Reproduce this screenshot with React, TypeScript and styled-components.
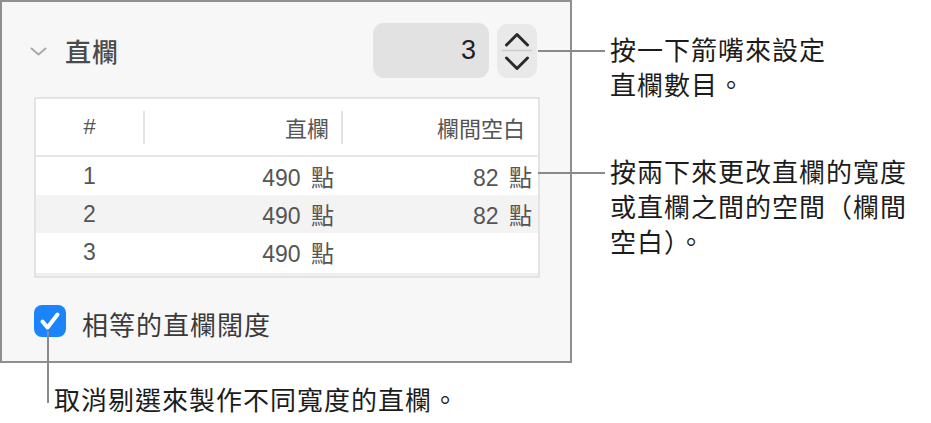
import styled, { createGlobalStyle } from "styled-components";

const GlobalStyle = createGlobalStyle`
  html, body {
    margin: 0;
    background: #ffffff;
  }
  body {
    font-family: "Liberation Sans", "Noto Sans CJK TC", sans-serif;
  }
`;

const Figure = styled.div`
  display: grid;
  grid-template-columns: 572px 1fr;
  grid-template-rows: 363px 1fr;
  width: 931px;
  height: 423px;
  overflow: hidden;
`;

const Panel = styled.section`
  box-sizing: border-box;
  display: flex;
  flex-direction: column;
  padding: 21px 33px 0 28px;
  border: 2px solid #8f8f8f;
  background: #f7f7f7;
`;

const HeaderRow = styled.div`
  display: flex;
  align-items: center;
  height: 55px;
`;

const Disclosure = styled.svg`
  width: 17px;
  height: 9px;
  margin-right: 18px;
  margin-top: 2px;
`;

const Title = styled.h2`
  flex: 1;
  margin: 0;
  font-size: 26px;
  font-weight: 500;
  letter-spacing: 1px;
  color: #4a4a4a;
`;

const NumberField = styled.div`
  box-sizing: border-box;
  display: flex;
  align-items: center;
  justify-content: flex-end;
  width: 116px;
  height: 55px;
  padding-right: 13px;
  border-radius: 11px;
  background: #e2e2e2;
  font-size: 27px;
  color: #222222;
`;

const Stepper = styled.div`
  display: flex;
  width: 40px;
  height: 54px;
  margin-left: 8px;
  border-radius: 10px;
  background: #e9e9e9;
`;

const Table = styled.div`
  display: flex;
  flex-direction: column;
  width: 506px;
  margin: 19px 0 0 4px;
  box-sizing: border-box;
  border: 2px solid #e3e3e3;
  background: #ffffff;
`;

const Row = styled.div<{ $head?: boolean; $striped?: boolean }>`
  display: grid;
  grid-template-columns: 107px 198px 1fr;
  align-items: center;
  height: ${(p) => (p.$head ? "56px" : "38px")};
  border-bottom: ${(p) => (p.$head ? "2px solid #e6e6e6" : "none")};
  background: ${(p) => (p.$striped ? "#f3f3f3" : "transparent")};
  font-size: ${(p) => (p.$head ? "22px" : "23px")};
  word-spacing: ${(p) => (p.$head ? "0" : "4px")};
  color: #555555;
`;

const Cell = styled.div<{ $align: "center" | "right"; $pad?: number; $rule?: boolean }>`
  position: relative;
  display: flex;
  align-items: center;
  justify-content: ${(p) => (p.$align === "center" ? "center" : "flex-end")};
  height: 100%;
  padding-right: ${(p) => p.$pad ?? 0}px;

  &::before {
    content: "";
    display: ${(p) => (p.$rule ? "block" : "none")};
    position: absolute;
    left: 0;
    top: 50%;
    width: 2px;
    height: 33px;
    margin-top: -16px;
    background: #e4e4e4;
  }
`;

const TableFoot = styled.div`
  height: 3px;
  margin-top: 2px;
  background: #eeeeee;
`;

const CheckRow = styled.label`
  display: flex;
  align-items: center;
  gap: 16px;
  margin: 22px 0 0 4px;
  font-size: 26px;
  letter-spacing: 1px;
  color: #3a3a3a;
`;

const CheckBox = styled.span`
  display: flex;
  align-items: center;
  justify-content: center;
  width: 32px;
  height: 32px;
  border-radius: 8px;
  background: #1b84fa;
`;

const CheckLabel = styled.span`
  margin-top: 5px;
`;

const Notes = styled.div`
  display: flex;
  flex-direction: column;
  gap: 52px;
  padding: 34px 0 0 38px;
`;

const Note = styled.p`
  position: relative;
  margin: 0;
  font-size: 26px;
  line-height: 35px;
  letter-spacing: 1px;
  color: #1c1c1c;

  &::before {
    content: "";
    position: absolute;
    left: -72px;
    top: 16px;
    width: 67px;
    height: 2px;
    background: #8a8a8a;
  }
`;

const Caption = styled.p`
  grid-column: 1 / span 2;
  position: relative;
  margin: 21px 0 0 54px;
  font-size: 26px;
  line-height: 35px;
  letter-spacing: 1px;
  color: #1c1c1c;

  &::before {
    content: "";
    position: absolute;
    left: -7px;
    top: -53px;
    width: 2px;
    height: 72px;
    background: #8a8a8a;
  }
`;

const rows = [
  { n: "1", width: "490 點", gutter: "82 點" },
  { n: "2", width: "490 點", gutter: "82 點" },
  { n: "3", width: "490 點", gutter: "" },
];

export default function App() {
  return (
    <>
      <GlobalStyle />
      <Figure>
        <Panel>
          <HeaderRow>
            <Disclosure viewBox="0 0 17 9">
              <polyline
                points="1.5,1.5 8.5,7.5 15.5,1.5"
                fill="none"
                stroke="#a9a9a9"
                strokeWidth="2"
                strokeLinecap="round"
                strokeLinejoin="round"
              />
            </Disclosure>
            <Title>直欄</Title>
            <NumberField>3</NumberField>
            <Stepper>
              <svg width="40" height="54" viewBox="0 0 40 54">
                <polyline
                  points="9.5,21 20,10.5 30.5,21"
                  fill="none"
                  stroke="#2a2a2a"
                  strokeWidth="3"
                  strokeLinecap="round"
                  strokeLinejoin="round"
                />
                <line x1="5" y1="26.5" x2="35" y2="26.5" stroke="#cccccc" strokeWidth="1.5" />
                <polyline
                  points="9.5,34 20,44.5 30.5,34"
                  fill="none"
                  stroke="#2a2a2a"
                  strokeWidth="3"
                  strokeLinecap="round"
                  strokeLinejoin="round"
                />
              </svg>
            </Stepper>
          </HeaderRow>

          <Table>
            <Row $head>
              <Cell $align="center">#</Cell>
              <Cell $align="right" $pad={12} $rule>
                直欄
              </Cell>
              <Cell $align="right" $pad={13} $rule>
                欄間空白
              </Cell>
            </Row>
            {rows.map((r, i) => (
              <Row key={r.n} $striped={i === 1}>
                <Cell $align="center">{r.n}</Cell>
                <Cell $align="right" $pad={7}>
                  {r.width}
                </Cell>
                <Cell $align="right" $pad={6}>
                  {r.gutter}
                </Cell>
              </Row>
            ))}
            <TableFoot />
          </Table>

          <CheckRow>
            <CheckBox>
              <svg width="32" height="32" viewBox="0 0 32 32">
                <polyline
                  points="8.5,16.5 13.5,22.5 23.5,9.5"
                  fill="none"
                  stroke="#ffffff"
                  strokeWidth="4"
                  strokeLinecap="round"
                  strokeLinejoin="round"
                />
              </svg>
            </CheckBox>
            <CheckLabel>相等的直欄闊度</CheckLabel>
          </CheckRow>
        </Panel>

        <Notes>
          <Note>
            按一下箭嘴來設定
            <br />
            直欄數目。
          </Note>
          <Note>
            按兩下來更改直欄的寬度
            <br />
            或直欄之間的空間（欄間
            <br />
            空白）。
          </Note>
        </Notes>

        <Caption>取消剔選來製作不同寬度的直欄。</Caption>
      </Figure>
    </>
  );
}
